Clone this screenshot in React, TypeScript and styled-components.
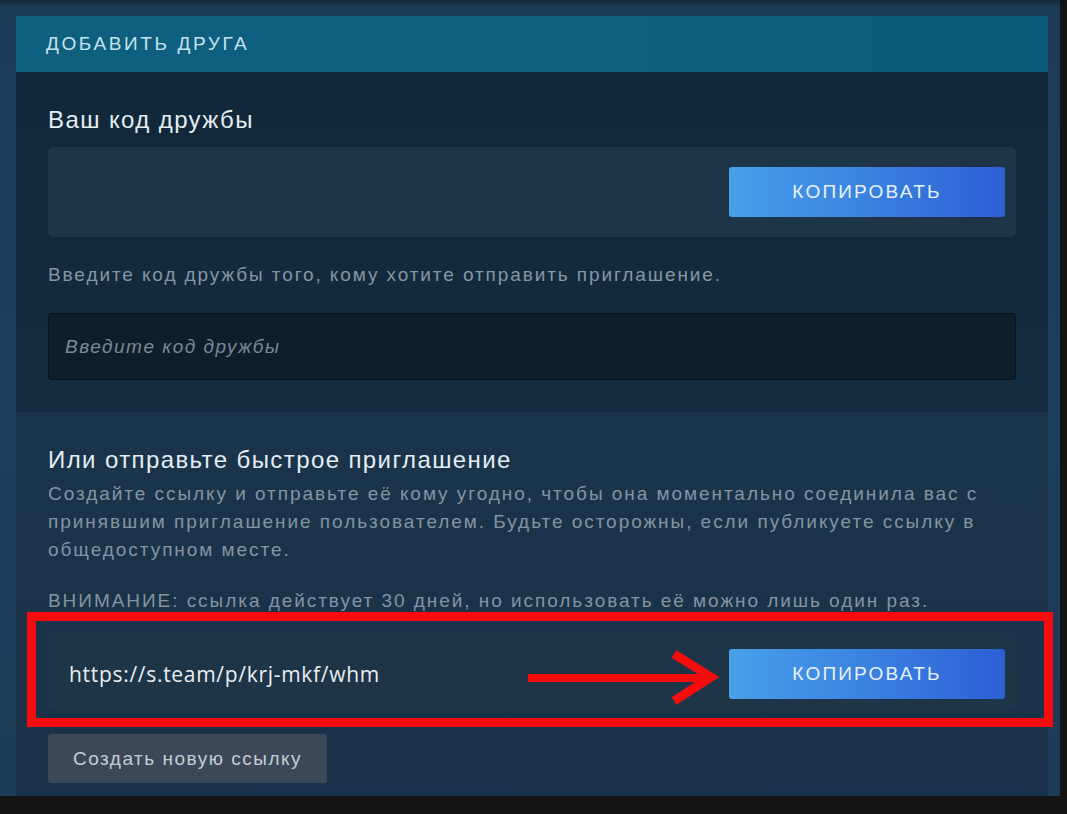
import styled, { createGlobalStyle } from "styled-components"

const GlobalStyle = createGlobalStyle`
  html, body {
    margin: 0;
    padding: 0;
    background: #141414;
  }
  body {
    font-family: "Liberation Sans", Arial, sans-serif;
  }
`

const Frame = styled.div`
  width: 1067px;
  height: 814px;
  display: flex;
  flex-direction: column;
  background: #141414;
`

const Backdrop = styled.div`
  width: 1060px;
  height: 796px;
  box-sizing: border-box;
  padding: 16px 12px 0 16px;
  background: linear-gradient(180deg, #14283a 0px, #1b3a56 6px, #1c3e5c 50%, #1b3a55 100%);
  display: flex;
`

const Panel = styled.div`
  flex: 1;
  display: flex;
  flex-direction: column;
`

const Header = styled.div`
  height: 56px;
  box-sizing: border-box;
  padding: 0 30px;
  display: flex;
  align-items: center;
  background: linear-gradient(90deg, #0f5f80, #0d5e7f 60%, #0b5a7a);
  color: #c4e3ee;
  font-size: 19px;
  letter-spacing: 2.6px;
  text-transform: uppercase;
`

const Section = styled.div<{ $tone: "dark" | "light"; $height: number }>`
  height: ${(p) => p.$height}px;
  box-sizing: border-box;
  padding: 35px 32px 0 32px;
  display: flex;
  flex-direction: column;
  background: ${(p) =>
    p.$tone === "dark"
      ? "linear-gradient(180deg, #11273a, #132a3e 60%, #142c40)"
      : "linear-gradient(180deg, #1a344b, #1a3349 60%, #19314a)"};
`

const Title = styled.div`
  font-size: 24px;
  line-height: 26px;
  letter-spacing: 1.4px;
  color: #e4edf2;
`

const CodeBox = styled.div<{ $pad: number; $gap: number }>`
  position: relative;
  margin-top: ${(p) => p.$gap}px;
  display: flex;
  align-items: center;
  justify-content: space-between;
  padding: ${(p) => p.$pad}px 11px ${(p) => p.$pad}px 21px;
  background: #1e3447;
  border-radius: 5px;
`

const CopyButton = styled.button<{ $h: number }>`
  width: 276px;
  height: ${(p) => p.$h}px;
  border: none;
  border-radius: 3px;
  background: linear-gradient(90deg, #48a0ea 0%, #3a82e0 50%, #2c5fd5 100%);
  color: #e8f1fb;
  font-family: "Liberation Sans", Arial, sans-serif;
  font-size: 19px;
  letter-spacing: 2.2px;
  cursor: pointer;
`

const Hint = styled.div`
  margin-top: 26px;
  font-size: 19px;
  line-height: 24px;
  letter-spacing: 1.9px;
  color: #8696a5;
`

const CodeInput = styled.input`
  margin-top: 26px;
  height: 67px;
  box-sizing: border-box;
  padding: 0 16px;
  background: #0f1e2b;
  border: 1px solid #08121b;
  border-radius: 4px;
  color: #d0d8e0;
  font-family: "Liberation Sans", Arial, sans-serif;
  font-size: 19px;
  letter-spacing: 1.5px;
  outline: none;
  &::placeholder {
    color: #7b8995;
    font-style: italic;
  }
`

const Paragraph = styled.div<{ $gap: number }>`
  margin-top: ${(p) => p.$gap}px;
  font-size: 19px;
  line-height: 28px;
  letter-spacing: 1.95px;
  color: #8494a3;
`

const LinkText = styled.div`
  font-family: "Open Sans", "Liberation Sans", sans-serif;
  font-size: 21px;
  letter-spacing: 0.7px;
  color: #e9eef2;
`

const Highlight = styled.div`
  position: absolute;
  left: -21px;
  top: -26px;
  right: -37px;
  bottom: -17px;
  border: 9px solid #f50d0d;
  pointer-events: none;
`

const Arrow = styled.svg`
  position: absolute;
  left: 476px;
  top: 12px;
  pointer-events: none;
`

const NewLinkButton = styled.button`
  margin-top: 24px;
  align-self: flex-start;
  width: 279px;
  height: 49px;
  border: none;
  border-radius: 3px;
  background: #3c4858;
  color: #c6cdd4;
  font-family: "Liberation Sans", Arial, sans-serif;
  font-size: 19px;
  letter-spacing: 1.5px;
  cursor: pointer;
`

export default function App() {
  return (
    <>
      <GlobalStyle />
      <Frame>
        <Backdrop>
          <Panel>
            <Header>Добавить друга</Header>
            <Section $tone="dark" $height={340}>
              <Title>Ваш код дружбы</Title>
              <CodeBox $pad={20} $gap={14}>
                <span />
                <CopyButton $h={50}>КОПИРОВАТЬ</CopyButton>
              </CodeBox>
              <Hint>Введите код дружбы того, кому хотите отправить приглашение.</Hint>
              <CodeInput placeholder="Введите код дружбы" />
            </Section>
            <Section $tone="light" $height={384}>
              <Title>Или отправьте быстрое приглашение</Title>
              <Paragraph $gap={7}>
                Создайте ссылку и отправьте её кому угодно, чтобы она моментально соединила вас с
                принявшим приглашение пользователем. Будьте осторожны, если публикуете ссылку в
                общедоступном месте.
              </Paragraph>
              <Paragraph $gap={23}>
                ВНИМАНИЕ: ссылка действует 30 дней, но использовать её можно лишь один раз.
              </Paragraph>
              <CodeBox $pad={11} $gap={23}>
                <LinkText>https://s.team/p/krj-mkf/whm</LinkText>
                <CopyButton $h={50}>КОПИРОВАТЬ</CopyButton>
                <Highlight />
                <Arrow width="200" height="56" viewBox="0 0 200 56">
                  <path d="M4 28 H186" stroke="#f50d0d" strokeWidth="8" fill="none" />
                  <path
                    d="M150 4 L187 27 L150 51"
                    stroke="#f50d0d"
                    strokeWidth="9"
                    fill="none"
                    strokeLinejoin="miter"
                  />
                </Arrow>
              </CodeBox>
              <NewLinkButton>Создать новую ссылку</NewLinkButton>
            </Section>
          </Panel>
        </Backdrop>
      </Frame>
    </>
  )
}
